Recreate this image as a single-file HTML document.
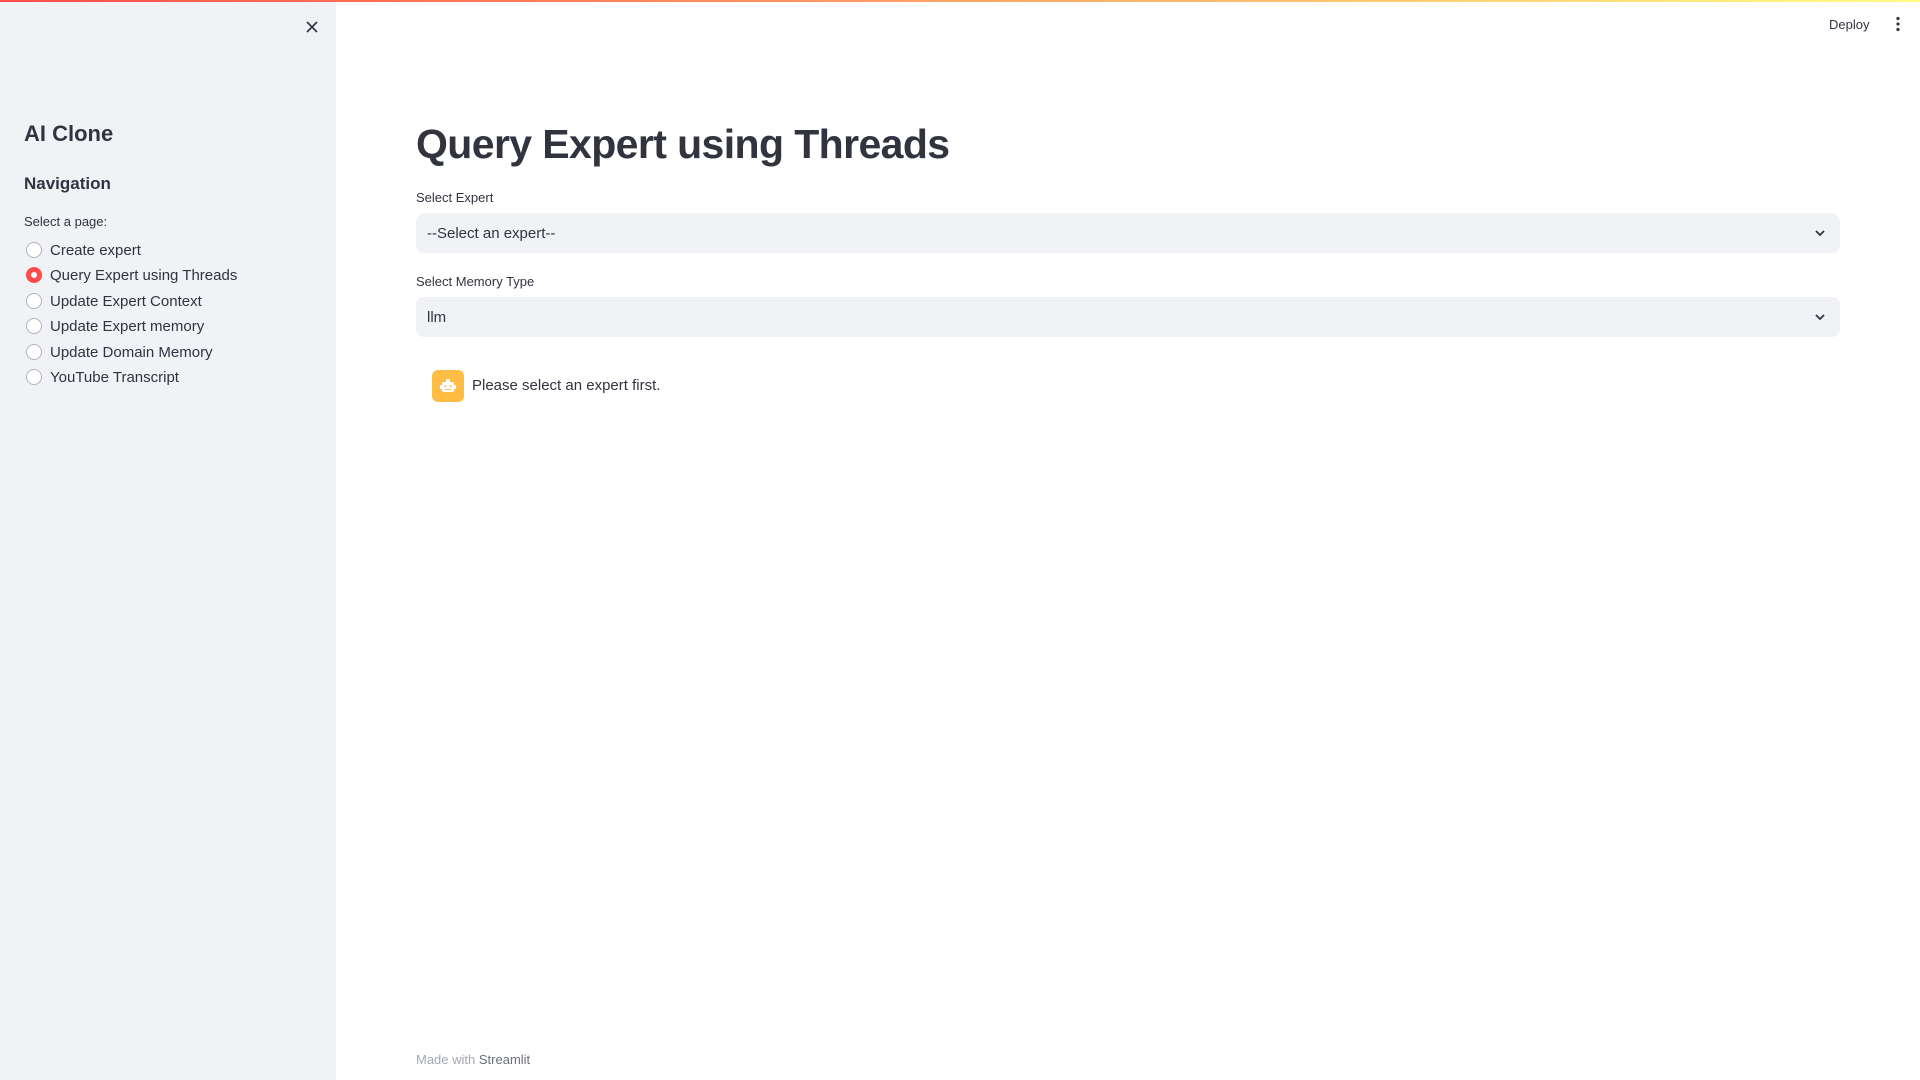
<!DOCTYPE html>
<html><head><meta charset="utf-8"><style>
*{box-sizing:border-box;margin:0;padding:0}
body{width:1920px;height:1080px;overflow:hidden;background:#fff;font-family:"Liberation Sans",sans-serif;color:#31333f;position:relative}
.bar{position:absolute;left:0;top:0;width:1920px;height:2px;background:linear-gradient(90deg,#ff4b4b,#fffd80)}
.side{position:absolute;left:0;top:2px;width:336px;height:1078px;background:#f0f2f6}
.abs{position:absolute;white-space:nowrap}
.radio{position:absolute;left:26px;width:16px;height:16px;border-radius:50%;border:1px solid #b0b3bb;background:#fff}
.radio.on{background:#ff4b4b;border:none}
.radio.on::after{content:"";position:absolute;left:5px;top:5px;width:6px;height:6px;border-radius:50%;background:#fff}
.rl{position:absolute;left:50px;font-size:15px;line-height:18px}
.sel{position:absolute;left:416px;width:1424px;height:40px;background:#f0f2f6;border-radius:8px;font-size:15px;padding-left:11px;line-height:42px}
.sel svg{position:absolute;right:14px;top:14px}
.lbl{position:absolute;left:416px;font-size:13px}
</style></head><body>
<div class="bar"></div>
<div class="side">
<svg class="abs" style="left:305px;top:18px" width="14" height="14" viewBox="0 0 14 14"><path d="M2 2L12 12M12 2L2 12" stroke="#31333f" stroke-width="1.6"/></svg>
<div class="abs" style="left:24px;top:119px;font-size:22px;font-weight:bold">AI Clone</div>
<div class="abs" style="left:24px;top:172px;font-size:17px;font-weight:bold">Navigation</div>
<div class="abs" style="left:24px;top:212px;font-size:13px">Select a page:</div>
</div>
<div class="radio" style="top:242px"></div><div class="rl" style="top:242px">Create expert</div>
<div class="radio on" style="top:267px"></div><div class="rl" style="top:267px">Query Expert using Threads</div>
<div class="radio" style="top:293px"></div><div class="rl" style="top:293px">Update Expert Context</div>
<div class="radio" style="top:318px"></div><div class="rl" style="top:318px">Update Expert memory</div>
<div class="radio" style="top:344px"></div><div class="rl" style="top:344px">Update Domain Memory</div>
<div class="radio" style="top:369px"></div><div class="rl" style="top:369px">YouTube Transcript</div>

<div class="abs" style="left:1829px;top:17px;font-size:13px">Deploy</div>
<svg class="abs" style="left:1895px;top:16px" width="6" height="16"><circle cx="3" cy="2.5" r="1.6" fill="#31333f"/><circle cx="3" cy="8" r="1.6" fill="#31333f"/><circle cx="3" cy="13.5" r="1.6" fill="#31333f"/></svg>

<div class="abs" style="left:416px;top:114px;font-size:41px;font-weight:bold;letter-spacing:-0.6px;line-height:60px">Query Expert using Threads</div>
<div class="lbl" style="top:190px">Select Expert</div>
<div class="sel" style="top:213px">--Select an expert--<svg width="12" height="12" viewBox="0 0 12 12"><path d="M2 4L6 8L10 4" stroke="#31333f" stroke-width="1.8" fill="none"/></svg></div>
<div class="lbl" style="top:274px">Select Memory Type</div>
<div class="sel" style="top:297px">llm<svg width="12" height="12" viewBox="0 0 12 12"><path d="M2 4L6 8L10 4" stroke="#31333f" stroke-width="1.8" fill="none"/></svg></div>
<div class="abs" style="left:432px;top:370px;width:32px;height:32px;border-radius:6px;background:#ffbd45">
<svg width="32" height="32" viewBox="0 0 32 32"><rect x="10" y="12" width="12" height="10" rx="2" fill="#fff"/><rect x="14" y="9" width="4" height="3" fill="#fff"/><rect x="8" y="15" width="2" height="4" fill="#fff"/><rect x="22" y="15" width="2" height="4" fill="#fff"/><circle cx="13.5" cy="16" r="1" fill="#ffbd45"/><circle cx="18.5" cy="16" r="1" fill="#ffbd45"/><rect x="13" y="19" width="6" height="1" fill="#ffbd45"/></svg></div>
<div class="abs" style="left:472px;top:377px;font-size:15px">Please select an expert first.</div>
<div class="abs" style="left:416px;top:1052px;font-size:13px;color:#a3a8b4">Made with <span style="color:#6b6f7a">Streamlit</span></div>
</body></html>
